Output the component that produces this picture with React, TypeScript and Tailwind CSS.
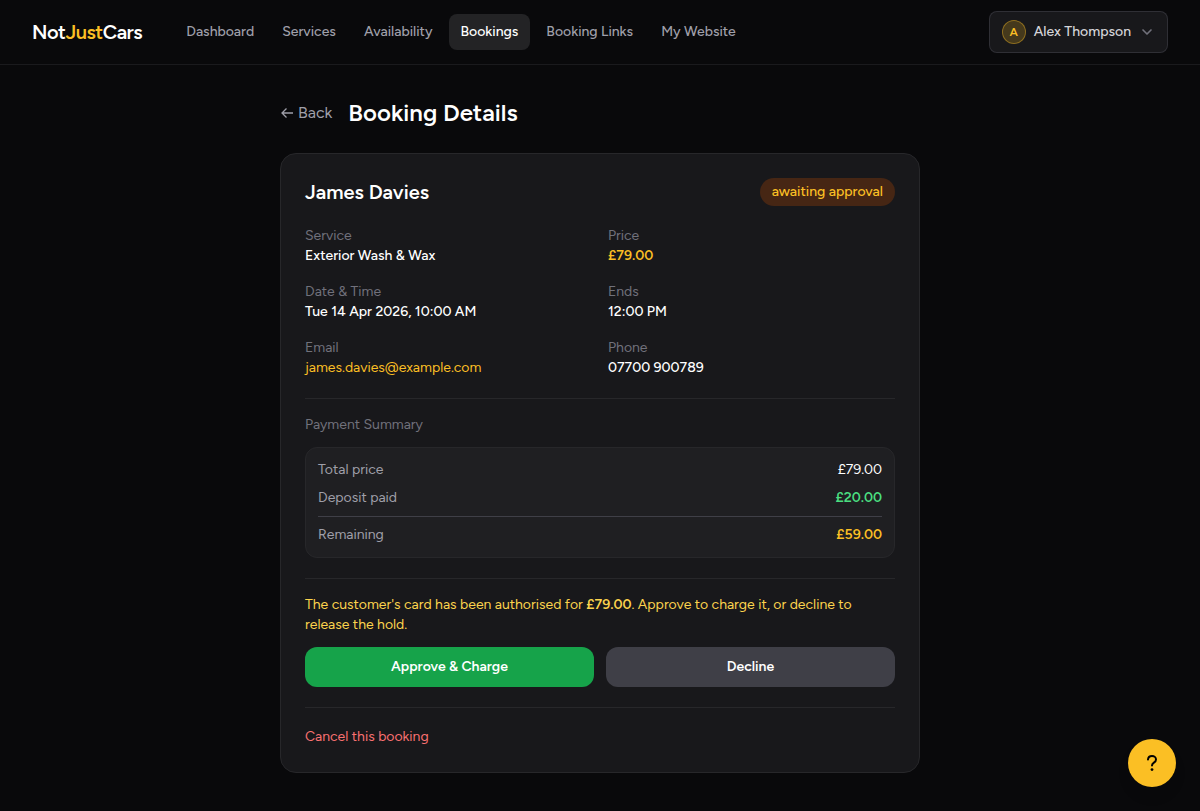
import type { ReactNode } from "react"
import clsx from "clsx"
import { ChevronDown } from "lucide-react"

const navItems = [
  { label: "Dashboard", href: "#dashboard" },
  { label: "Services", href: "#services" },
  { label: "Availability", href: "#availability" },
  { label: "Bookings", href: "#bookings", active: true },
  { label: "Booking Links", href: "#booking-links" },
  { label: "My Website", href: "#my-website" },
]

const details = [
  { label: "Service", value: "Exterior Wash & Wax" },
  { label: "Price", value: "£79.00", className: "font-semibold text-[#fbbf24]" },
  { label: "Date & Time", value: "Tue 14 Apr 2026, 10:00 AM" },
  { label: "Ends", value: "12:00 PM" },
  {
    label: "Email",
    value: (
      <a href="mailto:james.davies@example.com" className="font-normal text-[#fbbf24] hover:text-[#fcd34d]">
        james.davies@example.com
      </a>
    ),
  },
  { label: "Phone", value: "07700 900789" },
]

function Header() {
  return (
    <header className="flex h-[65px] items-center justify-between border-b border-zinc-800/60 px-8">
      <div className="flex items-center gap-8">
        <a href="#dashboard" className="text-xl font-semibold tracking-tight text-white">
          Not<span className="text-[#fbbf24]">Just</span>Cars
        </a>
        <nav className="flex items-center gap-1">
          {navItems.map((item) => (
            <a
              key={item.label}
              href={item.href}
              className={clsx(
                "rounded-lg px-3 py-2 text-sm font-medium whitespace-nowrap",
                item.active ? "bg-[#232325] text-white" : "text-zinc-400 hover:text-white"
              )}
            >
              {item.label}
            </a>
          ))}
        </nav>
      </div>
      <button
        type="button"
        className="flex items-center gap-2 rounded-lg border border-zinc-700/60 bg-zinc-900 px-3 py-2 text-sm font-medium text-zinc-300"
      >
        <span className="flex size-6 items-center justify-center rounded-full border border-[#fbbf24]/40 bg-[#fbbf24]/20 text-xs font-semibold text-[#fbbf24]">
          A
        </span>
        Alex Thompson
        <ChevronDown className="size-4 text-zinc-500" strokeWidth={2.5} />
      </button>
    </header>
  )
}

function Section({ children }: { children: ReactNode }) {
  return <section className="border-t border-zinc-800 pt-4">{children}</section>
}

export default function App() {
  return (
    <div className="min-h-screen bg-zinc-950 font-['Figtree','Inter',sans-serif] text-white">
      <Header />

      <main className="mx-auto max-w-2xl px-4 py-8">
        <div className="mb-6 flex items-center gap-4">
          <a href="#bookings" className="flex items-center gap-1 text-zinc-400 hover:text-white">
            <svg className="size-3.5" viewBox="0 0 14 14" fill="none" stroke="currentColor" strokeWidth="1.3">
              <path d="M13 7H2M6.5 2.5 2 7 6.5 11.5" />
            </svg>
            Back
          </a>
          <h1 className="text-2xl font-semibold">Booking Details</h1>
        </div>

        <div className="space-y-5 rounded-2xl border border-zinc-800 bg-zinc-900 p-6">
          <div className="flex items-center justify-between">
            <h2 className="text-xl font-semibold">James Davies</h2>
            <span className="rounded-full bg-[#462614] px-3 py-1 text-sm font-medium text-[#fbbf24]">
              awaiting approval
            </span>
          </div>

          <dl className="grid grid-cols-2 gap-4 text-sm">
            {details.map((item) => (
              <div key={item.label}>
                <dt className="text-zinc-500">{item.label}</dt>
                <dd className={item.className ?? "font-medium"}>{item.value}</dd>
              </div>
            ))}
          </dl>

          <Section>
            <h3 className="mb-3 text-sm text-zinc-500">Payment Summary</h3>
            <dl className="space-y-2 rounded-xl border border-zinc-800 bg-[#1f1f22] p-3 text-sm">
              <div className="flex justify-between">
                <dt className="text-zinc-400">Total price</dt>
                <dd>£79.00</dd>
              </div>
              <div className="flex justify-between">
                <dt className="text-zinc-400">Deposit paid</dt>
                <dd className="font-semibold text-[#4ade80]">£20.00</dd>
              </div>
              <div className="flex justify-between border-t border-zinc-700 pt-2">
                <dt className="text-zinc-400">Remaining</dt>
                <dd className="font-semibold text-[#fbbf24]">£59.00</dd>
              </div>
            </dl>
          </Section>

          <Section>
            <p className="mb-3 text-sm text-[#fcd34d]">
              The customer's card has been authorised for <strong className="font-semibold">£79.00</strong>.
              Approve to charge it, or decline to release the hold.
            </p>
            <div className="grid grid-cols-2 gap-3 text-sm font-semibold">
              <button type="button" className="rounded-xl bg-[#16a34a] py-2.5 hover:bg-[#22c55e]">
                Approve & Charge
              </button>
              <button type="button" className="rounded-xl bg-zinc-700 py-2.5 hover:bg-zinc-600">
                Decline
              </button>
            </div>
          </Section>

          <Section>
            <button type="button" className="text-sm text-[#f87171] hover:text-[#fca5a5]">
              Cancel this booking
            </button>
          </Section>
        </div>
      </main>

      <button
        type="button"
        aria-label="Help"
        className="fixed right-6 bottom-6 flex size-12 items-center justify-center rounded-full bg-[#fbbf24] text-black shadow-lg"
      >
        <svg className="size-6" viewBox="0 0 24 24" fill="none" stroke="currentColor" strokeWidth="2" strokeLinecap="round">
          <path d="M8 8.5C8.2 6.3 9.8 5 12 5s4 1.4 4 3.4c0 1.6-.9 2.4-2.1 3.2-1.2.8-1.9 1.5-1.9 3" />
          <circle cx="12" cy="18.6" r="1.4" fill="currentColor" stroke="none" />
        </svg>
      </button>
    </div>
  )
}
